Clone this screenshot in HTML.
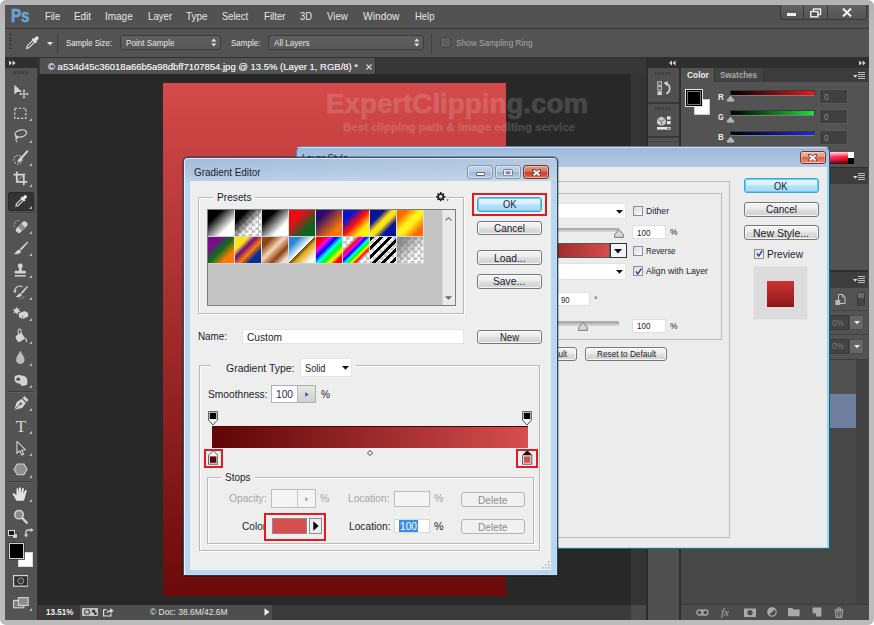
<!DOCTYPE html>
<html lang="en"><head><meta charset="utf-8"><title>Gradient Editor</title>
<style>
html,body{margin:0;padding:0;background:#fff;}
body{width:874px;height:625px;overflow:hidden;position:relative;font-family:"Liberation Sans", sans-serif;}
#app{position:absolute;left:0;top:0;width:874px;height:625px;overflow:hidden;}
#app div,#app span,#app svg{position:absolute;box-sizing:border-box;}
#app span{white-space:pre;transform-origin:0 50%;}
</style></head>
<body><div id="app">
<div style="left:0px;top:0px;width:874px;height:625px;background:linear-gradient(#b2b2b2,#bcbcbc 30px);border-radius:6px;"></div>
<div style="left:5px;top:5px;width:864px;height:615px;background:#535353;"></div>
<div style="left:5px;top:5px;width:864px;height:23px;background:#525252;"></div>
<div style="left:5px;top:27.6px;width:864px;height:1.2px;background:#3a3a3a;"></div>
<span style="left:10.5px;top:5.8px;font-size:18px;line-height:20px;color:#6ea5d8;font-weight:bold;-webkit-text-stroke:0.5px #6ea5d8;transform:scaleX(0.84);">Ps</span>
<span style="left:44.8px;top:9.4px;font-size:11px;line-height:14px;color:#e6e6e6;transform:scaleX(0.857);">File</span>
<span style="left:74px;top:9.4px;font-size:11px;line-height:14px;color:#e6e6e6;transform:scaleX(0.896);">Edit</span>
<span style="left:105px;top:9.4px;font-size:11px;line-height:14px;color:#e6e6e6;transform:scaleX(0.906);">Image</span>
<span style="left:147.6px;top:9.4px;font-size:11px;line-height:14px;color:#e6e6e6;transform:scaleX(0.879);">Layer</span>
<span style="left:185.5px;top:9.4px;font-size:11px;line-height:14px;color:#e6e6e6;transform:scaleX(0.901);">Type</span>
<span style="left:221.9px;top:9.4px;font-size:11px;line-height:14px;color:#e6e6e6;transform:scaleX(0.85);">Select</span>
<span style="left:263.5px;top:9.4px;font-size:11px;line-height:14px;color:#e6e6e6;transform:scaleX(0.879);">Filter</span>
<span style="left:300px;top:9.4px;font-size:11px;line-height:14px;color:#e6e6e6;transform:scaleX(0.853);">3D</span>
<span style="left:326.7px;top:9.4px;font-size:11px;line-height:14px;color:#e6e6e6;transform:scaleX(0.875);">View</span>
<span style="left:363.2px;top:9.4px;font-size:11px;line-height:14px;color:#e6e6e6;transform:scaleX(0.933);">Window</span>
<span style="left:414.6px;top:9.4px;font-size:11px;line-height:14px;color:#e6e6e6;transform:scaleX(0.857);">Help</span>
<div style="left:779.5px;top:5px;width:87px;height:14.8px;background:linear-gradient(#626262,#545454);border:1px solid #393939;border-radius:0 0 4px 4px;border-top:none;"></div>
<div style="left:803px;top:5px;width:1px;height:14px;background:#3a3a3a;"></div>
<div style="left:826.5px;top:5px;width:1px;height:14px;background:#3a3a3a;"></div>
<div style="left:787px;top:13.2px;width:9.4px;height:2.8px;background:#f0f0f0;"></div>
<svg style="left:809.5px;top:7.6px;" width="12" height="10" viewBox="0 0 12 10"><rect x="3.5" y="1" width="7" height="5.5" fill="none" stroke="#eee" stroke-width="1.4"/><rect x="0.8" y="3.6" width="7" height="5.2" fill="#4f4f4f" stroke="#eee" stroke-width="1.4"/></svg>
<svg style="left:842px;top:7.6px;" width="10" height="9" viewBox="0 0 10 9"><path d="M1 0.6 L9 8.4 M9 0.6 L1 8.4" stroke="#f4f4f4" stroke-width="2.1" fill="none"/></svg>
<div style="left:5px;top:29px;width:864px;height:28px;background:#535353;"></div>
<div style="left:5px;top:57px;width:864px;height:1px;background:#303030;"></div>
<div style="left:8.7px;top:32.5px;width:3.2px;height:1px;background:#3a3a3a;"></div>
<div style="left:8.7px;top:35px;width:3.2px;height:1px;background:#3a3a3a;"></div>
<div style="left:8.7px;top:37.5px;width:3.2px;height:1px;background:#3a3a3a;"></div>
<div style="left:8.7px;top:40px;width:3.2px;height:1px;background:#3a3a3a;"></div>
<div style="left:8.7px;top:42.5px;width:3.2px;height:1px;background:#3a3a3a;"></div>
<div style="left:8.7px;top:45px;width:3.2px;height:1px;background:#3a3a3a;"></div>
<div style="left:8.7px;top:47.5px;width:3.2px;height:1px;background:#3a3a3a;"></div>
<svg style="left:24px;top:34.5px;" width="16" height="16" viewBox="0 0 16 16"><g transform="rotate(45 8 8)"><rect x="6.7" y="5.5" width="2.6" height="9" rx="0.8" fill="none" stroke="#e4e4e4" stroke-width="1.1"/><rect x="5.2" y="3.6" width="5.6" height="2" fill="#e4e4e4"/><rect x="6.2" y="-0.6" width="3.6" height="4.6" rx="1.6" fill="#e4e4e4"/><path d="M8 14.5 L8 16.3" stroke="#e4e4e4" stroke-width="1"/></g></svg>
<svg style="left:46.5px;top:41.5px;" width="6" height="4" viewBox="0 0 6 4"><path d="M0 0 L6 0 L3 3.4 Z" fill="#e0e0e0"/></svg>
<div style="left:57px;top:33px;width:1px;height:20px;background:#3d3d3d;"></div>
<span style="left:65.5px;top:35.8px;font-size:9.5px;line-height:14px;color:#ececec;transform:scaleX(0.822);">Sample Size:</span>
<div style="left:119.5px;top:35px;width:101px;height:15px;background:linear-gradient(#5f5f5f,#585858);border:1px solid #3c3c3c;border-radius:3px;"></div>
<span style="left:125.5px;top:35.8px;font-size:9.5px;line-height:14px;color:#e4e4e4;transform:scaleX(0.858);">Point Sample</span>
<svg style="left:211px;top:38.2px;" width="6" height="9" viewBox="0 0 6 9"><path d="M0.3 3.4 L5.3 3.4 L2.8 0.4 Z M0.3 5.4 L5.3 5.4 L2.8 8.4 Z" fill="#e6e6e6"/></svg>
<span style="left:231.2px;top:35.8px;font-size:9.5px;line-height:14px;color:#ececec;transform:scaleX(0.846);">Sample:</span>
<div style="left:267.5px;top:35px;width:156px;height:15px;background:linear-gradient(#5f5f5f,#585858);border:1px solid #3c3c3c;border-radius:3px;"></div>
<span style="left:273.5px;top:35.8px;font-size:9.5px;line-height:14px;color:#e4e4e4;transform:scaleX(0.851);">All Layers</span>
<svg style="left:414px;top:38.2px;" width="6" height="9" viewBox="0 0 6 9"><path d="M0.3 3.4 L5.3 3.4 L2.8 0.4 Z M0.3 5.4 L5.3 5.4 L2.8 8.4 Z" fill="#e6e6e6"/></svg>
<div style="left:431px;top:33px;width:1px;height:20px;background:#404040;"></div>
<div style="left:439.5px;top:37.2px;width:11.5px;height:11.3px;background:#5e5e5e;border:1px solid #474747;border-radius:2px;"></div>
<span style="left:455.5px;top:35.6px;font-size:9.5px;line-height:14px;color:#a6a6a6;transform:scaleX(0.867);">Show Sampling Ring</span>
<div style="left:5px;top:58px;width:32px;height:562px;background:#535353;"></div>
<div style="left:5px;top:58px;width:32px;height:9.5px;background:#2f2f2f;"></div>
<svg style="left:9px;top:59.5px;" width="8" height="6" viewBox="0 0 8 6"><path d="M0 0.5 L3 3 L0 5.5 Z M3.6 0.5 L6.6 3 L3.6 5.5 Z" fill="#d6d6d6"/></svg>
<div style="left:37px;top:58px;width:1px;height:562px;background:#333;"></div>
<div style="left:13px;top:71px;width:1px;height:3px;background:#3b3b3b;"></div>
<div style="left:15px;top:71px;width:1px;height:3px;background:#3b3b3b;"></div>
<div style="left:17px;top:71px;width:1px;height:3px;background:#3b3b3b;"></div>
<div style="left:19px;top:71px;width:1px;height:3px;background:#3b3b3b;"></div>
<div style="left:21px;top:71px;width:1px;height:3px;background:#3b3b3b;"></div>
<div style="left:23px;top:71px;width:1px;height:3px;background:#3b3b3b;"></div>
<div style="left:25px;top:71px;width:1px;height:3px;background:#3b3b3b;"></div>
<div style="left:27px;top:71px;width:1px;height:3px;background:#3b3b3b;"></div>
<div style="left:8px;top:192px;width:26px;height:18.5px;background:#343434;border:1px solid #2a2a2a;border-radius:2px;"></div>
<div style="left:8px;top:212.3px;width:26px;height:1px;background:#3f3f3f;"></div>
<div style="left:8px;top:213.3px;width:26px;height:1px;background:#5c5c5c;"></div>
<div style="left:8px;top:391px;width:26px;height:1px;background:#3f3f3f;"></div>
<div style="left:8px;top:392px;width:26px;height:1px;background:#5c5c5c;"></div>
<div style="left:8px;top:480.8px;width:26px;height:1px;background:#3f3f3f;"></div>
<div style="left:8px;top:481.8px;width:26px;height:1px;background:#5c5c5c;"></div>
<svg style="left:12.2px;top:82.7px;" width="16.6" height="16.6" viewBox="0 0 18 18"><path d="M2.5 2 L2.5 12.5 L5.6 9.8 L10.8 9.6 Z" fill="#d4d4d4"/><path d="M13 8 L13 16 M9 12 L17 12" stroke="#d4d4d4" stroke-width="1.1"/><path d="M13 6.8 L14.6 9 L11.4 9 Z M13 17.2 L14.6 15 L11.4 15 Z M7.8 12 L10 10.4 L10 13.6 Z M18.2 12 L16 10.4 L16 13.6 Z" fill="#d4d4d4"/></svg>
<svg style="left:12.2px;top:105px;" width="16.6" height="16.6" viewBox="0 0 18 18"><rect x="3" y="3.5" width="12" height="11" fill="none" stroke="#d4d4d4" stroke-width="1.3" stroke-dasharray="2.6 1.7"/></svg>
<svg style="left:28.8px;top:118.1px;" width="3" height="3" viewBox="0 0 3 3"><path d="M3 0 L3 3 L0 3 Z" fill="#b4b4b4"/></svg>
<svg style="left:12.2px;top:127.2px;" width="16.6" height="16.6" viewBox="0 0 18 18"><ellipse cx="9.5" cy="7" rx="6.3" ry="3.8" fill="none" stroke="#d4d4d4" stroke-width="1.4" transform="rotate(-12 9.5 7)"/><path d="M5 9.5 C3 11 4.5 13 6 12 C7 11.3 5.6 10 4.8 11.5 C4 13 4.2 15 5.5 16.5" fill="none" stroke="#d4d4d4" stroke-width="1.1"/></svg>
<svg style="left:28.8px;top:140.3px;" width="3" height="3" viewBox="0 0 3 3"><path d="M3 0 L3 3 L0 3 Z" fill="#b4b4b4"/></svg>
<svg style="left:12.2px;top:149.7px;" width="16.6" height="16.6" viewBox="0 0 18 18"><ellipse cx="6.5" cy="10.5" rx="4.3" ry="4.8" fill="none" stroke="#d4d4d4" stroke-width="1.1" stroke-dasharray="1.8 1.4"/><path d="M16.5 1.5 L9.5 9.5" stroke="#d4d4d4" stroke-width="2.2" stroke-linecap="round"/><path d="M9.8 8.2 C7.5 8.6 6.2 11 5.8 13.2 C8.6 13.4 11 12.2 11.2 9.8 Z" fill="#d4d4d4"/></svg>
<svg style="left:28.8px;top:162.8px;" width="3" height="3" viewBox="0 0 3 3"><path d="M3 0 L3 3 L0 3 Z" fill="#b4b4b4"/></svg>
<svg style="left:12.2px;top:170.4px;" width="16.6" height="16.6" viewBox="0 0 18 18"><path d="M5.2 1.5 L5.2 13 L16.5 13 M1.5 5 L12.8 5 L12.8 16.5" fill="none" stroke="#d4d4d4" stroke-width="1.9"/><path d="M14.5 3.5 L6.5 11.5" stroke="#d4d4d4" stroke-width="0.9"/></svg>
<svg style="left:28.8px;top:183.5px;" width="3" height="3" viewBox="0 0 3 3"><path d="M3 0 L3 3 L0 3 Z" fill="#b4b4b4"/></svg>
<svg style="left:12.2px;top:193px;" width="16.6" height="16.6" viewBox="0 0 18 18"><g transform="translate(1.5 1)"><g transform="rotate(45 8 8)"><rect x="6.7" y="5.5" width="2.6" height="9" rx="0.8" fill="none" stroke="#ececec" stroke-width="1.1"/><rect x="5.2" y="3.6" width="5.6" height="2" fill="#ececec"/><rect x="6.2" y="-0.6" width="3.6" height="4.6" rx="1.6" fill="#ececec"/><path d="M8 14.5 L8 16.3" stroke="#ececec" stroke-width="1"/></g></g></svg>
<svg style="left:28.8px;top:206.1px;" width="3" height="3" viewBox="0 0 3 3"><path d="M3 0 L3 3 L0 3 Z" fill="#b4b4b4"/></svg>
<svg style="left:12.2px;top:218.3px;" width="16.6" height="16.6" viewBox="0 0 18 18"><g transform="rotate(-45 10.5 10)"><rect x="3" y="6.8" width="15" height="6.4" rx="3.2" fill="#d4d4d4"/><rect x="8" y="6.8" width="5" height="6.4" fill="#8c8c8c"/></g><path d="M2.5 9.5 A5 5 0 0 1 8.5 3" fill="none" stroke="#d4d4d4" stroke-width="1" stroke-dasharray="1.5 1.3"/></svg>
<svg style="left:28.8px;top:231.4px;" width="3" height="3" viewBox="0 0 3 3"><path d="M3 0 L3 3 L0 3 Z" fill="#b4b4b4"/></svg>
<svg style="left:12.2px;top:239.6px;" width="16.6" height="16.6" viewBox="0 0 18 18"><path d="M16.8 1.5 L8.6 9.6 L10.2 11.2 L17.6 2.6 Z" fill="#d4d4d4"/><path d="M8 10.2 C5.4 10.4 5 13 2.2 15.2 C6 16 9.6 14.6 9.8 11.8 Z" fill="#d4d4d4"/></svg>
<svg style="left:28.8px;top:252.7px;" width="3" height="3" viewBox="0 0 3 3"><path d="M3 0 L3 3 L0 3 Z" fill="#b4b4b4"/></svg>
<svg style="left:12.2px;top:261.5px;" width="16.6" height="16.6" viewBox="0 0 18 18"><circle cx="9" cy="4.3" r="2.7" fill="#d4d4d4"/><path d="M7.8 6 L10.2 6 L10.8 10 L7.2 10 Z" fill="#d4d4d4"/><rect x="3" y="9.6" width="12" height="3" rx="0.8" fill="#d4d4d4"/><rect x="3" y="14.2" width="12" height="1.6" fill="#d4d4d4"/></svg>
<svg style="left:28.8px;top:274.6px;" width="3" height="3" viewBox="0 0 3 3"><path d="M3 0 L3 3 L0 3 Z" fill="#b4b4b4"/></svg>
<svg style="left:12.2px;top:283.7px;" width="16.6" height="16.6" viewBox="0 0 18 18"><path d="M16.5 2 L9.6 9.4 L11 10.8 L17.4 3 Z" fill="#d4d4d4"/><path d="M9 10 C6.8 10.2 6.4 12.4 4.2 14.2 C7.4 15 10.4 13.8 10.6 11.4 Z" fill="#d4d4d4"/><path d="M3 8.5 A5.5 5.5 0 0 1 11.5 3.2" fill="none" stroke="#d4d4d4" stroke-width="1.2"/><path d="M1.2 7 L3.2 10 L5.2 7 Z" fill="#d4d4d4"/><path d="M13 13.5 A5.5 5.5 0 0 1 8 16.2" fill="none" stroke="#d4d4d4" stroke-width="1" stroke-dasharray="1.4 1.2"/></svg>
<svg style="left:28.8px;top:296.8px;" width="3" height="3" viewBox="0 0 3 3"><path d="M3 0 L3 3 L0 3 Z" fill="#b4b4b4"/></svg>
<svg style="left:12.2px;top:305.3px;" width="16.6" height="16.6" viewBox="0 0 18 18"><path d="M7.5 9 L13.5 6.5 L17.5 8.6 L17.5 12.4 L11.6 15.2 L7.5 13 Z" fill="#d4d4d4"/><path d="M11.6 11 L11.6 15.2" stroke="#777" stroke-width="0.8"/><path d="M4.8 1.6 L5.8 4.4 L8.6 3.4 L7 5.8 L9.4 7.6 L6.4 7.8 L6 10.6 L4.2 8.2 L1.6 9.6 L2.6 6.8 L0.4 5 L3.4 4.8 Z" fill="#d4d4d4"/></svg>
<svg style="left:28.8px;top:318.4px;" width="3" height="3" viewBox="0 0 3 3"><path d="M3 0 L3 3 L0 3 Z" fill="#b4b4b4"/></svg>
<svg style="left:12.2px;top:327.7px;" width="16.6" height="16.6" viewBox="0 0 18 18"><path d="M4.2 8.6 L10.2 5 L14.2 11.4 L8.2 15.2 C6.6 16 3 10.4 4.2 8.6 Z" fill="#d4d4d4"/><path d="M6.8 8.6 L6.8 2.6 C6.8 0.6 9.8 0.6 9.8 2.6 L9.8 6" fill="none" stroke="#d4d4d4" stroke-width="1.1"/><path d="M14.2 10.4 C16.2 11.6 16.8 14 16.2 16 C15 15 14.6 13 14.2 10.4 Z" fill="#d4d4d4"/></svg>
<svg style="left:28.8px;top:340.8px;" width="3" height="3" viewBox="0 0 3 3"><path d="M3 0 L3 3 L0 3 Z" fill="#b4b4b4"/></svg>
<svg style="left:12.2px;top:349.4px;" width="16.6" height="16.6" viewBox="0 0 18 18"><path d="M9 2 C10.6 5.6 13.6 8.4 13.6 11.6 A4.6 4.6 0 0 1 4.4 11.6 C4.4 8.4 7.4 5.6 9 2 Z" fill="#bcbcbc"/></svg>
<svg style="left:28.8px;top:362.5px;" width="3" height="3" viewBox="0 0 3 3"><path d="M3 0 L3 3 L0 3 Z" fill="#b4b4b4"/></svg>
<svg style="left:12.2px;top:371.6px;" width="16.6" height="16.6" viewBox="0 0 18 18"><path d="M2.6 6.4 C2.6 3.6 6 3 9 3.4 C12.6 3.8 16.6 5.2 16.6 8.6 L16.6 12.6 C16.6 15 13 15.2 10.6 14.8 L8 12.6 C4.6 12.4 2.6 10.4 2.6 6.4 Z" fill="#d4d4d4"/><ellipse cx="6.8" cy="7.8" rx="2" ry="1.7" fill="#4a4a4a"/></svg>
<svg style="left:28.8px;top:384.7px;" width="3" height="3" viewBox="0 0 3 3"><path d="M3 0 L3 3 L0 3 Z" fill="#b4b4b4"/></svg>
<svg style="left:12.2px;top:395.3px;" width="16.6" height="16.6" viewBox="0 0 18 18"><path d="M2.6 16 L4.8 8 L10.4 4 L15 8.6 L11 14 Z" fill="#d4d4d4"/><path d="M11.4 3.2 L13.6 1 L18 5.4 L15.8 7.6 Z" fill="#d4d4d4"/><path d="M3 15.6 L8.6 10" stroke="#4a4a4a" stroke-width="1"/><circle cx="9.4" cy="9.4" r="1.3" fill="#4a4a4a"/></svg>
<svg style="left:28.8px;top:408.4px;" width="3" height="3" viewBox="0 0 3 3"><path d="M3 0 L3 3 L0 3 Z" fill="#b4b4b4"/></svg>
<span style="left:15.8px;top:417.5px;font-size:17px;line-height:18px;color:#d6d6d6;font-family:'Liberation Serif',serif;">T</span>
<svg style="left:28.8px;top:431.3px;" width="3" height="3" viewBox="0 0 3 3"><path d="M3 0 L3 3 L0 3 Z" fill="#bdbdbd"/></svg>
<svg style="left:12.2px;top:440px;" width="16.6" height="16.6" viewBox="0 0 18 18"><path d="M5.4 1.6 L5.4 14.6 L8.4 11.6 L10.6 16.4 L12.6 15.4 L10.4 10.8 L14.6 10.6 Z" fill="#4a4a4a" stroke="#d4d4d4" stroke-width="1.2" stroke-linejoin="round"/></svg>
<svg style="left:28.8px;top:453.1px;" width="3" height="3" viewBox="0 0 3 3"><path d="M3 0 L3 3 L0 3 Z" fill="#b4b4b4"/></svg>
<svg style="left:12.2px;top:461.4px;" width="16.6" height="16.6" viewBox="0 0 18 18"><path d="M2.2 9 L5.6 3.2 L13 3.2 L16.4 9 L13 14.8 L5.6 14.8 Z" fill="#8e8e8e" stroke="#d4d4d4" stroke-width="1.1"/></svg>
<svg style="left:28.8px;top:474.5px;" width="3" height="3" viewBox="0 0 3 3"><path d="M3 0 L3 3 L0 3 Z" fill="#b4b4b4"/></svg>
<svg style="left:12.2px;top:486.2px;" width="16.6" height="16.6" viewBox="0 0 18 18"><path transform="translate(-1.2 0) scale(1.16 1)" d="M5 16 L3.2 11.6 C2 9.6 1 8.4 2.2 7.8 C3.4 7.4 4.4 9 5.2 10 L5.2 3.6 C5.2 2.2 7 2.2 7 3.6 L7.2 8 L7.6 2.2 C7.8 0.8 9.6 1 9.4 2.4 L9.4 8 L10.4 2.8 C10.6 1.6 12.4 2 12.2 3.2 L11.6 8.4 L13.2 4.8 C13.6 3.6 15.2 4.2 14.8 5.4 L13.4 11 C13.2 13 12.6 14.4 12 16 Z" fill="#e2e2e2"/></svg>
<svg style="left:28.8px;top:499.3px;" width="3" height="3" viewBox="0 0 3 3"><path d="M3 0 L3 3 L0 3 Z" fill="#b4b4b4"/></svg>
<svg style="left:12.2px;top:507.7px;" width="16.6" height="16.6" viewBox="0 0 18 18"><circle cx="7.6" cy="7.2" r="4.6" fill="#8a8a8a" stroke="#d4d4d4" stroke-width="1.6"/><path d="M11 10.8 L16 16" stroke="#d4d4d4" stroke-width="2.6" stroke-linecap="round"/></svg>
<div style="left:11.5px;top:532.5px;width:6px;height:6px;background:#d0d0d0;border:1px solid #444;"></div>
<div style="left:8.3px;top:529.5px;width:6.4px;height:6.4px;background:#1a1a1a;border:1px solid #d8d8d8;"></div>
<svg style="left:23.5px;top:528px;" width="10" height="10" viewBox="0 0 10 10"><path d="M2 7.6 L2 3.6 Q2 2 3.6 2 L7.4 2" fill="none" stroke="#d4d4d4" stroke-width="1.3"/><path d="M0 6.6 L4 6.6 L2 9.6 Z M6.6 0 L6.6 4 L9.6 2 Z" fill="#d4d4d4"/></svg>
<div style="left:17.7px;top:552px;width:15.8px;height:15px;background:#fff;border:1px solid #d8d8d8;"></div>
<div style="left:8.8px;top:542.8px;width:15.6px;height:16.2px;background:#000;border:1px solid #cfcfcf;box-shadow:0 0 0 0.8px #3a3a3a;"></div>
<svg style="left:12.6px;top:575.2px;" width="15.6" height="12" viewBox="0 0 15.6 12"><rect x="0.6" y="0.6" width="14.4" height="10.6" fill="#2e2e2e" stroke="#d4d4d4" stroke-width="1.2"/><circle cx="7.8" cy="5.9" r="3" fill="#3a3a3a" stroke="#9a9a9a" stroke-width="1"/></svg>
<svg style="left:12.6px;top:597px;" width="16" height="11.5" viewBox="0 0 16 11.5"><rect x="0.6" y="3.4" width="10.2" height="7.4" fill="#7a7a7a" stroke="#d4d4d4" stroke-width="1.1"/><rect x="5.4" y="0.6" width="9.8" height="7.8" fill="#8c8c8c" stroke="#d4d4d4" stroke-width="1.1"/></svg>
<svg style="left:28.8px;top:607.5px;" width="3" height="3" viewBox="0 0 3 3"><path d="M3 0 L3 3 L0 3 Z" fill="#b4b4b4"/></svg>
<div style="left:38px;top:58px;width:608px;height:16px;background:#373737;"></div>
<div style="left:38px;top:74px;width:593px;height:531px;background:#282828;"></div>
<div style="left:40px;top:58px;width:336px;height:16px;background:#525252;border-right:1px solid #2c2c2c;"></div>
<span style="left:47.5px;top:59.8px;font-size:9.5px;line-height:14px;color:#e8e8e8;text-shadow:0 0 0.5px #ddd;transform:scaleX(0.998);">© a534d45c36018a66b5a98dbff7107854.jpg @ 13.5% (Layer 1, RGB/8) *</span>
<svg style="left:365.5px;top:63.5px;" width="6" height="6" viewBox="0 0 6 6"><path d="M0.5 0.5 L5.5 5.5 M5.5 0.5 L0.5 5.5" stroke="#d8d8d8" stroke-width="1.1"/></svg>
<div style="left:631px;top:74px;width:14.5px;height:531px;background:#353535;"></div>
<div style="left:645.5px;top:58px;width:2px;height:562px;background:#2b2b2b;"></div>
<div style="left:163.2px;top:82.8px;width:343.1px;height:513.4px;background:linear-gradient(#d44a4a,#6a0a0a);"></div>
<span style="left:326px;top:88.8px;font-size:28px;line-height:30px;color:#fff;font-weight:bold;-webkit-text-stroke:0.7px #fff;opacity:0.14;transform:scaleX(0.991);">ExpertClipping.com</span>
<span style="left:342.8px;top:120.3px;font-size:11.5px;line-height:14px;color:#fff;font-weight:bold;-webkit-text-stroke:0.3px #fff;opacity:0.14;transform:scaleX(1.003);">Best clipping path &amp; image editing service</span>
<div style="left:38px;top:605px;width:593px;height:15px;background:#3a3a3a;"></div>
<div style="left:80px;top:605px;width:192px;height:15px;background:#4e4e4e;"></div>
<span style="left:45.8px;top:604.7px;font-size:9px;line-height:14px;color:#f2f2f2;font-weight:bold;transform:scaleX(0.894);">13.51%</span>
<div style="left:81.5px;top:608px;width:16.5px;height:8.2px;background:#c4c4c4;border-radius:1px;"></div>
<svg style="left:82.5px;top:608.2px;" width="15" height="8" viewBox="0 0 15 8"><circle cx="4" cy="4" r="2.5" fill="none" stroke="#333" stroke-width="1.6" stroke-dasharray="1.3 0.8"/><circle cx="10.6" cy="3.2" r="1.6" fill="#333"/><circle cx="12.4" cy="5.6" r="1.4" fill="#333"/></svg>
<svg style="left:102.5px;top:607.3px;" width="11" height="10" viewBox="0 0 11 10"><path d="M0.6 2.6 L0.6 9 L8 9 L8 6.6" fill="none" stroke="#ddd" stroke-width="1.2"/><path d="M0.6 2.6 L3.6 2.6" stroke="#ddd" stroke-width="1.2"/><path d="M3.4 6.6 C3.8 4 5.6 3 7.4 3 L7.4 1 L10.6 3.8 L7.4 6.6 L7.4 4.8 C5.8 4.8 4.6 5.2 3.4 6.6 Z" fill="#ddd"/></svg>
<span style="left:150px;top:605.2px;font-size:9.5px;line-height:14px;color:#e6e6e6;transform:scaleX(0.888);">© Doc: 38.6M/42.6M</span>
<svg style="left:263.5px;top:608px;" width="6" height="8" viewBox="0 0 6 8"><path d="M0.5 0.3 L5.5 4 L0.5 7.7 Z" fill="#efefef"/></svg>
<div style="left:631px;top:605px;width:14.5px;height:15px;background:#4a4a4a;"></div>
<div style="left:647.5px;top:58px;width:221.5px;height:9.5px;background:#2f2f2f;"></div>
<svg style="left:668.5px;top:59.8px;" width="8" height="6" viewBox="0 0 8 6"><path d="M3 0.5 L0 3 L3 5.5 Z M6.6 0.5 L3.6 3 L6.6 5.5 Z" fill="#d6d6d6"/></svg>
<svg style="left:858.5px;top:59.8px;" width="8" height="6" viewBox="0 0 8 6"><path d="M0 0.5 L3 3 L0 5.5 Z M3.6 0.5 L6.6 3 L3.6 5.5 Z" fill="#d6d6d6"/></svg>
<div style="left:647.5px;top:67.5px;width:31px;height:552.5px;background:#505050;"></div>
<div style="left:678.5px;top:67.5px;width:2.5px;height:552.5px;background:#2e2e2e;"></div>
<div style="left:647.5px;top:101.5px;width:31px;height:2px;background:#383838;"></div>
<div style="left:647.5px;top:135.8px;width:31px;height:2px;background:#383838;"></div>
<div style="left:655px;top:72px;width:1px;height:3px;background:#3a3a3a;"></div>
<div style="left:657px;top:72px;width:1px;height:3px;background:#3a3a3a;"></div>
<div style="left:659px;top:72px;width:1px;height:3px;background:#3a3a3a;"></div>
<div style="left:661px;top:72px;width:1px;height:3px;background:#3a3a3a;"></div>
<div style="left:663px;top:72px;width:1px;height:3px;background:#3a3a3a;"></div>
<div style="left:665px;top:72px;width:1px;height:3px;background:#3a3a3a;"></div>
<div style="left:667px;top:72px;width:1px;height:3px;background:#3a3a3a;"></div>
<div style="left:669px;top:72px;width:1px;height:3px;background:#3a3a3a;"></div>
<div style="left:655px;top:106.5px;width:1px;height:3px;background:#3a3a3a;"></div>
<div style="left:657px;top:106.5px;width:1px;height:3px;background:#3a3a3a;"></div>
<div style="left:659px;top:106.5px;width:1px;height:3px;background:#3a3a3a;"></div>
<div style="left:661px;top:106.5px;width:1px;height:3px;background:#3a3a3a;"></div>
<div style="left:663px;top:106.5px;width:1px;height:3px;background:#3a3a3a;"></div>
<div style="left:665px;top:106.5px;width:1px;height:3px;background:#3a3a3a;"></div>
<div style="left:667px;top:106.5px;width:1px;height:3px;background:#3a3a3a;"></div>
<div style="left:669px;top:106.5px;width:1px;height:3px;background:#3a3a3a;"></div>
<div style="left:647.5px;top:141px;width:31px;height:1px;background:#454545;"></div>
<svg style="left:657px;top:81px;" width="15" height="15" viewBox="0 0 15 15"><rect x="0.8" y="0.8" width="3.6" height="3.4" fill="none" stroke="#d8d8d8" stroke-width="0.9"/><rect x="0.8" y="5.6" width="3.6" height="3.4" fill="none" stroke="#d8d8d8" stroke-width="0.9"/><rect x="0.5" y="10.3" width="4.4" height="3.8" fill="#d0d0d0"/><path d="M9 2.6 C13.6 3.6 14 10 9.4 12.8" fill="none" stroke="#d8d8d8" stroke-width="1.6"/><path d="M6.6 1.4 L11 0.6 L9.6 5 Z" fill="#d8d8d8"/></svg>
<svg style="left:656px;top:115px;" width="16" height="15" viewBox="0 0 16 15"><path d="M1 4 L5.4 1.6 L9.8 4 L9.8 8.8 L5.4 11.2 L1 8.8 Z" fill="#c8c8c8"/><path d="M1 4 L5.4 6.2 L9.8 4 M5.4 6.2 L5.4 11.2" stroke="#666" stroke-width="0.8" fill="none"/><rect x="11" y="1.4" width="3.6" height="3.2" fill="#e6e6e6"/><rect x="11" y="6" width="3.6" height="3.2" fill="#e6e6e6"/><rect x="1" y="12" width="13.6" height="2.6" fill="#e6e6e6"/><rect x="11.5" y="12.6" width="2" height="1.4" fill="#555"/></svg>
<div style="left:681px;top:67.5px;width:188px;height:14.3px;background:#3c3c3c;"></div>
<div style="left:681px;top:81.8px;width:188px;height:85px;background:#535353;"></div>
<div style="left:681px;top:68.4px;width:34px;height:13.6px;background:#535353;border-right:1px solid #333;"></div>
<div style="left:715px;top:68.4px;width:49px;height:13px;background:#434343;border-right:1px solid #333;"></div>
<span style="left:686.7px;top:68.2px;font-size:9.5px;line-height:14px;color:#f0f0f0;font-weight:bold;transform:scaleX(0.879);">Color</span>
<span style="left:720.3px;top:68.2px;font-size:9.5px;line-height:14px;color:#a8a8a8;font-weight:bold;transform:scaleX(0.844);">Swatches</span>
<svg style="left:853px;top:72px;" width="12" height="8" viewBox="0 0 12 8"><path d="M0 3 L4.6 3 L2.3 5.8 Z" fill="#d8d8d8"/><path d="M5 0.5 L12 0.5 M5 2.5 L12 2.5 M5 4.5 L12 4.5 M5 6.5 L12 6.5" stroke="#bdbdbd" stroke-width="1"/></svg>
<div style="left:694px;top:99px;width:16px;height:15.6px;background:#fff;border:1px solid #ccc;"></div>
<div style="left:684.5px;top:89.2px;width:18.2px;height:18.3px;background:#000;border:1px solid #e6e6e6;box-shadow:inset 0 0 0 1px #000, inset 0 0 0 2px #777;"></div>
<span style="left:717.6px;top:89.6px;font-size:9.5px;line-height:14px;color:#efefef;font-weight:bold;transform:scaleX(0.844);">R</span>
<div style="left:730.2px;top:89.8px;width:84.5px;height:5.8px;background:linear-gradient(90deg,#000,#f01818);border:1px solid #3a3a3a;border-bottom-color:#7a7a7a;"></div>
<svg style="left:726.2px;top:95.4px;" width="9" height="7.4" viewBox="0 0 9 7.4"><path d="M4.5 0.3 L8.4 4.6 L8.4 7 L0.6 7 L0.6 4.6 Z" fill="#b4b4b4" stroke="#444" stroke-width="0.6"/></svg>
<div style="left:819px;top:89px;width:29px;height:15.2px;background:#404040;border:1px solid #5a5a5a;"></div>
<span style="left:823.6px;top:90.1px;font-size:9px;line-height:14px;color:#8c8c8c;transform:scaleX(0.917);">0</span>
<span style="left:717.6px;top:110px;font-size:9.5px;line-height:14px;color:#efefef;font-weight:bold;transform:scaleX(0.785);">G</span>
<div style="left:730.2px;top:110px;width:84.5px;height:5.8px;background:linear-gradient(90deg,#000,#20e038);border:1px solid #3a3a3a;border-bottom-color:#7a7a7a;"></div>
<svg style="left:726.2px;top:115.6px;" width="9" height="7.4" viewBox="0 0 9 7.4"><path d="M4.5 0.3 L8.4 4.6 L8.4 7 L0.6 7 L0.6 4.6 Z" fill="#b4b4b4" stroke="#444" stroke-width="0.6"/></svg>
<div style="left:819px;top:109.2px;width:29px;height:15.2px;background:#404040;border:1px solid #5a5a5a;"></div>
<span style="left:823.6px;top:110.3px;font-size:9px;line-height:14px;color:#8c8c8c;transform:scaleX(0.917);">0</span>
<span style="left:717.6px;top:130px;font-size:9.5px;line-height:14px;color:#efefef;font-weight:bold;transform:scaleX(0.844);">B</span>
<div style="left:730.2px;top:130.6px;width:84.5px;height:5.8px;background:linear-gradient(90deg,#000,#1828e8);border:1px solid #3a3a3a;border-bottom-color:#7a7a7a;"></div>
<svg style="left:726.2px;top:136.2px;" width="9" height="7.4" viewBox="0 0 9 7.4"><path d="M4.5 0.3 L8.4 4.6 L8.4 7 L0.6 7 L0.6 4.6 Z" fill="#b4b4b4" stroke="#444" stroke-width="0.6"/></svg>
<div style="left:819px;top:129.8px;width:29px;height:15.2px;background:#404040;border:1px solid #5a5a5a;"></div>
<span style="left:823.6px;top:130.9px;font-size:9px;line-height:14px;color:#8c8c8c;transform:scaleX(0.917);">0</span>
<div style="left:830px;top:151.5px;width:23.5px;height:12.2px;background:linear-gradient(180deg,rgba(255,255,255,.85) 0%,rgba(255,255,255,0) 45%,rgba(0,0,0,0) 55%,rgba(0,0,0,.75) 100%),linear-gradient(90deg,#ff2a6a,#ff0000);"></div>
<div style="left:848px;top:151.5px;width:5.5px;height:6.2px;background:#fff;"></div>
<div style="left:848px;top:157.7px;width:5.5px;height:6px;background:#000;"></div>
<div style="left:681px;top:166.6px;width:188px;height:1.5px;background:#2e2e2e;"></div>
<div style="left:681px;top:168.1px;width:188px;height:15.5px;background:#3c3c3c;"></div>
<svg style="left:853px;top:173px;" width="12" height="8" viewBox="0 0 12 8"><path d="M0 3 L4.6 3 L2.3 5.8 Z" fill="#d8d8d8"/><path d="M5 0.5 L12 0.5 M5 2.5 L12 2.5 M5 4.5 L12 4.5 M5 6.5 L12 6.5" stroke="#bdbdbd" stroke-width="1"/></svg>
<div style="left:681px;top:183.6px;width:188px;height:86.4px;background:#535353;"></div>
<div style="left:681px;top:270px;width:188px;height:1.5px;background:#2e2e2e;"></div>
<div style="left:681px;top:271.5px;width:188px;height:16px;background:#3e3e3e;"></div>
<svg style="left:853px;top:276px;" width="12" height="8" viewBox="0 0 12 8"><path d="M0 3 L4.6 3 L2.3 5.8 Z" fill="#d8d8d8"/><path d="M5 0.5 L12 0.5 M5 2.5 L12 2.5 M5 4.5 L12 4.5 M5 6.5 L12 6.5" stroke="#bdbdbd" stroke-width="1"/></svg>
<div style="left:681px;top:287.5px;width:188px;height:72px;background:#535353;"></div>
<div style="left:681px;top:359.5px;width:188px;height:34.5px;background:#515151;"></div>
<div style="left:681px;top:394px;width:188px;height:209.5px;background:#474747;"></div>
<svg style="left:835px;top:293.5px;" width="11" height="12" viewBox="0 0 11 12"><path d="M3.5 0.5 L7.5 0.5 L10 3 L10 9.5 L3.5 9.5 Z" fill="none" stroke="#c4c4c4" stroke-width="1" stroke-linejoin="miter"/><path d="M7.5 0.5 L7.5 3 L10 3" fill="none" stroke="#c4c4c4" stroke-width="0.8"/><rect x="0.4" y="6" width="4.8" height="5" fill="#b8b8b8"/></svg>
<div style="left:857px;top:292px;width:8px;height:14px;background:#444;border:1px solid #3a3a3a;border-radius:1px;"></div>
<div style="left:858px;top:293px;width:6px;height:5px;background:#6a6a6a;"></div>
<div style="left:830px;top:310.2px;width:39px;height:1px;background:#444;"></div>
<div style="left:820px;top:315px;width:29px;height:15px;background:#434343;border:1px solid #3a3a3a;"></div>
<span style="left:832px;top:315.8px;font-size:9.5px;line-height:14px;color:#7c7c7c;transform:scaleX(0.874);">0%</span>
<div style="left:849px;top:315px;width:15px;height:15.2px;background:#666666;border:1px solid #4a4a4a;border-radius:2px;"></div>
<svg style="left:853.5px;top:321.2px;" width="6" height="4" viewBox="0 0 6 4"><path d="M0 0 L6 0 L3 3.2 Z" fill="#ececec"/></svg>
<div style="left:820px;top:338.6px;width:29px;height:15px;background:#434343;border:1px solid #3a3a3a;"></div>
<span style="left:832px;top:339.4px;font-size:9.5px;line-height:14px;color:#7c7c7c;transform:scaleX(0.874);">0%</span>
<div style="left:849px;top:338.6px;width:15px;height:15.2px;background:#666666;border:1px solid #4a4a4a;border-radius:2px;"></div>
<svg style="left:853.5px;top:344.8px;" width="6" height="4" viewBox="0 0 6 4"><path d="M0 0 L6 0 L3 3.2 Z" fill="#ececec"/></svg>
<div style="left:830px;top:334.2px;width:39px;height:1px;background:#444;"></div>
<div style="left:830px;top:358.5px;width:39px;height:1px;background:#3c3c3c;"></div>
<div style="left:856.4px;top:359.5px;width:11.2px;height:244px;background:#434343;"></div>
<div style="left:867.6px;top:67.5px;width:1.4px;height:552.5px;background:#4a4a4a;"></div>
<div style="left:830px;top:394px;width:26px;height:34px;background:#6e809d;"></div>
<div style="left:681px;top:603.5px;width:188px;height:1px;background:#3a3a3a;"></div>
<div style="left:681px;top:604.5px;width:188px;height:15.5px;background:#4c4c4c;"></div>
<svg style="left:696px;top:607.5px;" width="13" height="9" viewBox="0 0 13 9"><rect x="0.8" y="2" width="6.4" height="5" rx="2.5" fill="none" stroke="#a9a9a9" stroke-width="1.3"/><rect x="5.6" y="2" width="6.4" height="5" rx="2.5" fill="none" stroke="#a9a9a9" stroke-width="1.3"/></svg>
<span style="left:721px;top:605.3px;font-size:11px;line-height:14px;color:#a9a9a9;font-style:italic;font-family:'Liberation Serif',serif;">fx</span>
<svg style="left:743.5px;top:607.5px;" width="12" height="9" viewBox="0 0 12 9"><rect x="0" y="0.5" width="12" height="8.5" fill="#a9a9a9"/><circle cx="6" cy="4.7" r="2.6" fill="#4c4c4c"/></svg>
<svg style="left:767px;top:607px;" width="10" height="10" viewBox="0 0 10 10"><circle cx="5" cy="5" r="4.2" fill="none" stroke="#a9a9a9" stroke-width="1.2"/><path d="M2 8 A4.2 4.2 0 0 1 8 2 Z" fill="#a9a9a9"/></svg>
<svg style="left:788px;top:607px;" width="12" height="9.5" viewBox="0 0 12 9.5"><path d="M0 1 L4.4 1 L5.6 2.4 L11.6 2.4 L11.6 9.2 L0 9.2 Z" fill="#a9a9a9"/></svg>
<svg style="left:811.5px;top:607px;" width="10" height="10" viewBox="0 0 10 10"><path d="M0.6 0.6 L9.4 0.6 L9.4 9.4 L4 9.4 L0.6 6.4 Z" fill="#a9a9a9"/><path d="M0.6 6.4 L4 6.4 L4 9.4" fill="#4c4c4c"/></svg>
<svg style="left:833.5px;top:606.5px;" width="10" height="11" viewBox="0 0 10 11"><path d="M0.5 2.8 L9.5 2.8 M3.4 2.6 L3.4 1 L6.6 1 L6.6 2.6" fill="none" stroke="#a9a9a9" stroke-width="1"/><path d="M1.4 4 L8.6 4 L8 10.4 L2 10.4 Z" fill="none" stroke="#a9a9a9" stroke-width="1"/><path d="M3.8 4.4 L3.8 10 M6.2 4.4 L6.2 10" stroke="#a9a9a9" stroke-width="0.9"/></svg>
<div style="left:295.5px;top:146px;width:534.5px;height:403px;background:linear-gradient(#9cb8db 0px,#b3cbe7 21px,#c0d6ec 22px);border:1px solid #4e90b4;border-radius:6px 6px 1px 1px;border-right:1px solid #1f5a70;border-bottom:1.5px solid #1f6f8f;border-top-color:#6b7f95;"></div>
<div style="left:296.5px;top:147px;width:531.5px;height:1px;background:rgba(255,255,255,.55);border-radius:5px 5px 0 0;"></div>
<span style="left:302px;top:150.5px;font-size:11px;line-height:14px;color:#1c1c2c;transform:scaleX(0.836);">Layer Style</span>
<div style="left:800px;top:150.5px;width:26px;height:13.6px;background:linear-gradient(#ecb9ab 0%,#e39582 45%,#d4664f 50%,#dc7e66 85%,#e6a08a 100%);border:1px solid #7a3328;border-radius:3px;box-shadow:inset 0 0 0 1px rgba(255,255,255,.35);"></div>
<svg style="left:808.4px;top:153.5px;" width="9.2" height="7.6" viewBox="0 0 9.2 7.6"><path d="M1.6 1.2 L7.6 6.4 M7.6 1.2 L1.6 6.4" stroke="#7a3226" stroke-width="3" stroke-linecap="round"/><path d="M1.6 1.2 L7.6 6.4 M7.6 1.2 L1.6 6.4" stroke="#fff" stroke-width="1.9" stroke-linecap="butt"/></svg>
<div style="left:301px;top:167px;width:526px;height:379.5px;background:#ececec;"></div>
<div style="left:827px;top:167px;width:2px;height:380.5px;background:#8fd8f2;"></div>
<div style="left:540px;top:180.5px;width:189.5px;height:357px;border:1px solid #bdbdbd;border-left:none;"></div>
<div style="left:540px;top:193px;width:181.5px;height:146.7px;border:1px solid #bdbdbd;border-left:none;"></div>
<div style="left:500px;top:202.7px;width:125.5px;height:16.8px;background:#fff;border:1px solid #e2e2e2;"></div>
<svg style="left:615.5px;top:209.6px;" width="7" height="4" viewBox="0 0 7 4"><path d="M0 0 L7 0 L3.5 3.8 Z" fill="#111"/></svg>
<div style="left:633.3px;top:206px;width:10px;height:10px;background:linear-gradient(135deg,#dcdcdc,#fafafa);border:1px solid #8a8f99;"></div>
<span style="left:645.8px;top:204.2px;font-size:9.5px;line-height:14px;color:#1c1c2c;transform:scaleX(0.908);">Dither</span>
<div style="left:500px;top:227.5px;width:119px;height:4.4px;background:linear-gradient(#a9a9a9 0%,#b4b4b4 50%,#cdcdcd 55%,#d2d2d2 100%);border-radius:1px;"></div>
<svg style="left:613.8px;top:228.6px;" width="10.4" height="9" viewBox="0 0 10.4 9"><path d="M5 0.5 L9.4 5.6 L9.4 8.4 L0.6 8.4 L0.6 5.6 Z" fill="#d6d6d6" stroke="#6e6e6e" stroke-width="0.9"/></svg>
<div style="left:631.5px;top:225.2px;width:34.5px;height:14px;background:#fff;border:1px solid #e0e0e0;"></div>
<span style="left:636.5px;top:225.5px;font-size:9px;line-height:14px;color:#1c1c2c;transform:scaleX(0.898);">100</span>
<span style="left:669.5px;top:225.3px;font-size:9.5px;line-height:14px;color:#1c1c2c;transform:scaleX(0.887);">%</span>
<div style="left:500px;top:243px;width:110px;height:15.3px;background:linear-gradient(90deg,#640808,#d64d4d);border:1px solid #555;"></div>
<div style="left:610px;top:243px;width:16.5px;height:15.3px;background:#f4f4f4;border:1px solid #333;"></div>
<svg style="left:614px;top:248.6px;" width="8" height="5" viewBox="0 0 8 5"><path d="M0 0 L8 0 L4 4.4 Z" fill="#111"/></svg>
<div style="left:633.3px;top:246.3px;width:10px;height:10px;background:linear-gradient(135deg,#dcdcdc,#fafafa);border:1px solid #8a8f99;"></div>
<span style="left:645.8px;top:244.4px;font-size:9.5px;line-height:14px;color:#1c1c2c;transform:scaleX(0.834);">Reverse</span>
<div style="left:500px;top:263px;width:125.5px;height:16.8px;background:#fff;border:1px solid #e2e2e2;"></div>
<svg style="left:615.5px;top:269.9px;" width="7" height="4" viewBox="0 0 7 4"><path d="M0 0 L7 0 L3.5 3.8 Z" fill="#111"/></svg>
<div style="left:633.3px;top:266.3px;width:10px;height:10px;background:linear-gradient(135deg,#dcdcdc,#fafafa);border:1px solid #8a8f99;"></div>
<svg style="left:634.8px;top:267.8px;" width="7" height="7" viewBox="0 0 7 7"><path d="M0.8 3.4 L2.8 6 L6.3 0.7" fill="none" stroke="#2b3fa0" stroke-width="1.4"/></svg>
<span style="left:645.8px;top:264.4px;font-size:9.5px;line-height:14px;color:#1c1c2c;transform:scaleX(0.925);">Align with Layer</span>
<div style="left:556px;top:291.6px;width:34px;height:14.2px;background:#fff;border:1px solid #e0e0e0;"></div>
<span style="left:560.8px;top:292.6px;font-size:9px;line-height:14px;color:#1c1c2c;transform:scaleX(0.849);">90</span>
<span style="left:594px;top:292.8px;font-size:9px;line-height:14px;color:#1c1c2c;">°</span>
<div style="left:500px;top:321.3px;width:119px;height:4.6px;background:linear-gradient(#a9a9a9 0%,#b4b4b4 50%,#cdcdcd 55%,#d2d2d2 100%);border-radius:1px;"></div>
<svg style="left:577.6px;top:322.2px;" width="10.4" height="9" viewBox="0 0 10.4 9"><path d="M5 0.5 L9.4 5.6 L9.4 8.4 L0.6 8.4 L0.6 5.6 Z" fill="#d6d6d6" stroke="#6e6e6e" stroke-width="0.9"/></svg>
<div style="left:631.5px;top:318.5px;width:34.5px;height:14px;background:#fff;border:1px solid #e0e0e0;"></div>
<span style="left:636.5px;top:318.8px;font-size:9px;line-height:14px;color:#1c1c2c;transform:scaleX(0.898);">100</span>
<span style="left:669.5px;top:318.6px;font-size:9.5px;line-height:14px;color:#1c1c2c;transform:scaleX(0.887);">%</span>
<div style="left:510px;top:346.5px;width:66.5px;height:14.3px;background:linear-gradient(#f4f4f4 0%,#ececec 45%,#dedede 52%,#d0d0d0 100%);border:1px solid #777;border-radius:3px;box-shadow:inset 0 0 0 1px rgba(255,255,255,.8);"></div>
<span style="left:519.75px;top:346.85px;font-size:9.5px;line-height:14px;color:#1c1c2c;transform:scaleX(0.84);">Make Default</span>
<div style="left:585.3px;top:346.5px;width:81.5px;height:14.3px;background:linear-gradient(#f4f4f4 0%,#ececec 45%,#dedede 52%,#d0d0d0 100%);border:1px solid #777;border-radius:3px;box-shadow:inset 0 0 0 1px rgba(255,255,255,.8);"></div>
<span style="left:596.55px;top:346.85px;font-size:9.5px;line-height:14px;color:#1c1c2c;transform:scaleX(0.866);">Reset to Default</span>
<div style="left:743.5px;top:178px;width:75px;height:15px;background:linear-gradient(#e9f6fd 0%,#d6effb 45%,#b6e2f8 52%,#a3d8f3 100%);border:1px solid #3aa9d8;border-radius:3px;box-shadow:inset 0 0 0 1px #5fd0f2;"></div>
<span style="left:774.25px;top:178.7px;font-size:11px;line-height:14px;color:#1c1c2c;transform:scaleX(0.849);">OK</span>
<div style="left:743.5px;top:201.5px;width:75px;height:15px;background:linear-gradient(#f4f4f4 0%,#ececec 45%,#dedede 52%,#d0d0d0 100%);border:1px solid #777;border-radius:3px;box-shadow:inset 0 0 0 1px rgba(255,255,255,.8);"></div>
<span style="left:765.5px;top:202.2px;font-size:11px;line-height:14px;color:#1c1c2c;transform:scaleX(0.905);">Cancel</span>
<div style="left:743.5px;top:225.2px;width:75px;height:15.3px;background:linear-gradient(#f4f4f4 0%,#ececec 45%,#dedede 52%,#d0d0d0 100%);border:1px solid #777;border-radius:3px;box-shadow:inset 0 0 0 1px rgba(255,255,255,.8);"></div>
<span style="left:753px;top:226.05px;font-size:11px;line-height:14px;color:#1c1c2c;transform:scaleX(0.954);">New Style...</span>
<div style="left:754px;top:248.5px;width:10px;height:10px;background:linear-gradient(135deg,#dcdcdc,#fafafa);border:1px solid #8a8f99;"></div>
<svg style="left:755.5px;top:250px;" width="7" height="7" viewBox="0 0 7 7"><path d="M0.8 3.4 L2.8 6 L6.3 0.7" fill="none" stroke="#2b3fa0" stroke-width="1.4"/></svg>
<span style="left:767.3px;top:246.6px;font-size:11px;line-height:14px;color:#1c1c2c;transform:scaleX(0.92);">Preview</span>
<div style="left:753px;top:266px;width:55px;height:53.5px;background:#dcdcdc;border:1px solid #e6e6e6;"></div>
<div style="left:767px;top:281px;width:26.5px;height:26px;background:linear-gradient(#c93535,#8f1717);"></div>
<div style="left:182px;top:155.5px;width:377px;height:421.8px;background:rgba(0,0,0,.25);border-radius:6px 6px 2px 2px;"></div>
<div style="left:183px;top:156.5px;width:375px;height:419.8px;background:linear-gradient(180deg,#a2bbd9 0px,#adc4df 12px,#bacee6 24px,#b9d5f0 25px,#b9d5f0 100%);border:1px solid #3c4e64;border-radius:5px 5px 1px 1px;border-right:1.6px solid #1d4c66;border-bottom-color:#1d3446;"></div>
<div style="left:184px;top:157.5px;width:373px;height:417.8px;border:1px solid rgba(255,255,255,.7);border-radius:4px 4px 1px 1px;border-right-color:rgba(255,255,255,.15);border-bottom-color:rgba(255,255,255,.2);"></div>
<div style="left:185px;top:158.5px;width:371px;height:22px;background:linear-gradient(90deg,rgba(255,255,255,0) 0%,rgba(255,255,255,.08) 40%,rgba(255,255,255,.18) 100%);border-radius:4px 4px 0 0;"></div>
<span style="left:193.5px;top:165.2px;font-size:10.5px;line-height:14px;color:#1a1c33;transform:scaleX(0.942);">Gradient Editor</span>
<div style="left:467.3px;top:165.4px;width:25.8px;height:14px;background:linear-gradient(#c0d3e8 0%,#b6cbe3 48%,#a2bad8 52%,#b2c8e1 100%);border:1px solid #8095b0;border-radius:3px;box-shadow:inset 0 0 0 1px rgba(255,255,255,.5);"></div>
<div style="left:476px;top:172px;width:9px;height:3.8px;background:#fff;border:1px solid #56657a;border-radius:1px;"></div>
<div style="left:495.3px;top:165.4px;width:26px;height:14px;background:linear-gradient(#c0d3e8 0%,#b6cbe3 48%,#a2bad8 52%,#b2c8e1 100%);border:1px solid #8095b0;border-radius:3px;box-shadow:inset 0 0 0 1px rgba(255,255,255,.5);"></div>
<svg style="left:503.2px;top:168.8px;" width="10" height="7.4" viewBox="0 0 10 7.4"><rect x="0.6" y="0.6" width="8.8" height="6.2" rx="1" fill="#fff" stroke="#56657a" stroke-width="0.9"/><rect x="3" y="2.8" width="4" height="2" fill="#8ea6c4" stroke="#56657a" stroke-width="0.7"/></svg>
<div style="left:523px;top:165.4px;width:26.2px;height:14px;background:linear-gradient(#e0a091 0%,#d4715c 45%,#c2402a 50%,#cf5a40 85%,#dd8a70 100%);border:1px solid #7a3328;border-radius:3px;box-shadow:inset 0 0 0 1px rgba(255,255,255,.35);"></div>
<svg style="left:531.5px;top:168.6px;" width="9.2" height="7.6" viewBox="0 0 9.2 7.6"><path d="M1.6 1.2 L7.6 6.4 M7.6 1.2 L1.6 6.4" stroke="#7a3226" stroke-width="3" stroke-linecap="round"/><path d="M1.6 1.2 L7.6 6.4 M7.6 1.2 L1.6 6.4" stroke="#fff" stroke-width="1.9" stroke-linecap="butt"/></svg>
<div style="left:189.6px;top:181.3px;width:361.4px;height:389px;background:#eeeeee;"></div>
<div style="left:198px;top:197px;width:265.5px;height:117px;border:1px solid #b9b9b9;box-shadow:inset 1px 1px 0 rgba(255,255,255,.9), 1px 1px 0 rgba(255,255,255,.9);"></div>
<div style="left:212.5px;top:195px;width:42.5px;height:5px;background:#eeeeee;"></div>
<span style="left:216.5px;top:190.3px;font-size:11px;line-height:14px;color:#1c1c2c;transform:scaleX(0.925);">Presets</span>
<svg style="left:436px;top:191.6px;" width="13" height="10" viewBox="0 0 13 10"><g transform="translate(4.7 4.7)"><circle r="2.6" fill="none" stroke="#222" stroke-width="1.7"/><g stroke="#222" stroke-width="1.5"><path d="M0 -4.6 L0 -2.8 M0 4.6 L0 2.8 M-4.6 0 L-2.8 0 M4.6 0 L2.8 0 M-3.25 -3.25 L-2 -2 M3.25 3.25 L2 2 M-3.25 3.25 L-2 2 M3.25 -3.25 L2 -2"/></g></g><path d="M10.4 7.4 L12.8 7.4 L11.6 8.8 Z" fill="#222"/></svg>
<div style="left:433.5px;top:195px;width:1.5px;height:4px;background:#eeeeee;"></div>
<div style="left:206.8px;top:209.2px;width:248.8px;height:96.8px;background:#c4c4c4;border:1px solid #7d7d7d;"></div>
<div style="left:441.8px;top:210.2px;width:12.8px;height:94.8px;background:#eaeaea;border-left:1px solid #d6d6d6;"></div>
<svg style="left:445px;top:216.5px;" width="7" height="4" viewBox="0 0 7 4"><path d="M0.4 3.6 L3.5 0.6 L6.6 3.6" fill="none" stroke="#777" stroke-width="1.2"/></svg>
<svg style="left:445px;top:296px;" width="7" height="4" viewBox="0 0 7 4"><path d="M0 0.3 L7 0.3 L3.5 3.8 Z" fill="#666"/></svg>
<div style="left:208px;top:210.4px;width:27px;height:26.8px;background:linear-gradient(135deg,#000 26%,#fff 72%);border-right:1px solid #dcdcdc;border-bottom:1px solid #d0d0d0;"></div>
<div style="left:235px;top:210.4px;width:27px;height:26.8px;background:linear-gradient(135deg,#000 24%,rgba(0,0,0,0) 62%),repeating-conic-gradient(#c4c4c4 0% 25%,#ffffff 0% 50%) 0 0/6.75px 6.7px;border-right:1px solid #dcdcdc;border-bottom:1px solid #d0d0d0;"></div>
<div style="left:262px;top:210.4px;width:27px;height:26.8px;background:linear-gradient(135deg,#000 26%,#fff 72%);border-right:1px solid #dcdcdc;border-bottom:1px solid #d0d0d0;"></div>
<div style="left:289px;top:210.4px;width:27px;height:26.8px;background:linear-gradient(135deg,#e60d18 32%,#0c6420 72%);border-right:1px solid #dcdcdc;border-bottom:1px solid #d0d0d0;"></div>
<div style="left:316px;top:210.4px;width:27px;height:26.8px;background:linear-gradient(135deg,#2a0a70 22%,#ff7a00 78%);border-right:1px solid #dcdcdc;border-bottom:1px solid #d0d0d0;"></div>
<div style="left:343px;top:210.4px;width:27px;height:26.8px;background:linear-gradient(135deg,#0a14c8 24%,#ff1010 50%,#fff000 76%);border-right:1px solid #dcdcdc;border-bottom:1px solid #d0d0d0;"></div>
<div style="left:370px;top:210.4px;width:27px;height:26.8px;background:linear-gradient(135deg,#0b1399 28%,#ffe414 45%,#ffe414 55%,#0b1399 72%);border-right:1px solid #dcdcdc;border-bottom:1px solid #d0d0d0;"></div>
<div style="left:397px;top:210.4px;width:27px;height:26.8px;background:linear-gradient(135deg,#ff6a00 20%,#fff21a 44%,#fff21a 56%,#ff6a00 82%);border-right:1px solid #dcdcdc;border-bottom:1px solid #d0d0d0;"></div>
<div style="left:208px;top:237.2px;width:27px;height:26.8px;background:linear-gradient(135deg,#7a0c8c 24%,#0a6e20 50%,#ff7a00 76%);border-right:1px solid #dcdcdc;border-bottom:1px solid #d0d0d0;"></div>
<div style="left:235px;top:237.2px;width:27px;height:26.8px;background:linear-gradient(135deg,#ffe414 26%,#6c0c8c 40%,#ff7a00 58%,#0a2c8c 76%);border-right:1px solid #dcdcdc;border-bottom:1px solid #d0d0d0;"></div>
<div style="left:262px;top:237.2px;width:27px;height:26.8px;background:linear-gradient(135deg,#8c4412 20%,#f8d4b6 44%,#8c4412 68%,#f6e0d2 88%);border-right:1px solid #dcdcdc;border-bottom:1px solid #d0d0d0;"></div>
<div style="left:289px;top:237.2px;width:27px;height:26.8px;background:linear-gradient(135deg,#2a86d2 20%,#ffffff 49%,#6c4a00 50%,#e4aa20 60%,#ffffff 88%);border-right:1px solid #dcdcdc;border-bottom:1px solid #d0d0d0;"></div>
<div style="left:316px;top:237.2px;width:27px;height:26.8px;background:linear-gradient(135deg,#ff0000 16%,#ff00ff 28%,#0000ff 40%,#00ffff 52%,#00ff00 64%,#ffff00 76%,#ff0000 86%);border-right:1px solid #dcdcdc;border-bottom:1px solid #d0d0d0;"></div>
<div style="left:343px;top:237.2px;width:27px;height:26.8px;background:linear-gradient(135deg,rgba(255,0,0,0) 24%,#ff0000 32%,#ff00ff 39%,#0000ff 46%,#00ffff 53%,#00ff00 60%,#ffff00 66%,#ff0000 72%,rgba(255,0,0,0) 80%),repeating-conic-gradient(#c4c4c4 0% 25%,#ffffff 0% 50%) 0 0/6.75px 6.7px;border-right:1px solid #dcdcdc;border-bottom:1px solid #d0d0d0;"></div>
<div style="left:370px;top:237.2px;width:27px;height:26.8px;background:repeating-linear-gradient(135deg,#000 0 3.2px,rgba(0,0,0,0) 3.2px 6.4px),repeating-conic-gradient(#c4c4c4 0% 25%,#ffffff 0% 50%) 0 0/6.75px 6.7px;border-right:1px solid #dcdcdc;border-bottom:1px solid #d0d0d0;"></div>
<div style="left:397px;top:237.2px;width:27px;height:26.8px;background:linear-gradient(135deg,rgba(120,120,120,.8) 20%,rgba(140,140,140,0) 70%),repeating-conic-gradient(#c4c4c4 0% 25%,#ffffff 0% 50%) 0 0/6.75px 6.7px;border-right:1px solid #dcdcdc;border-bottom:1px solid #d0d0d0;"></div>
<div style="left:471.5px;top:193.3px;width:75.3px;height:22.3px;border:2px solid #e01b24;"></div>
<div style="left:477px;top:197px;width:64.8px;height:14.5px;background:linear-gradient(#e9f6fd 0%,#d6effb 45%,#b6e2f8 52%,#a3d8f3 100%);border:1px solid #3aa9d8;border-radius:3px;box-shadow:inset 0 0 0 1px #5fd0f2;"></div>
<span style="left:502.65px;top:197.45px;font-size:11px;line-height:14px;color:#1c1c2c;transform:scaleX(0.849);">OK</span>
<div style="left:477px;top:220.5px;width:64.8px;height:14.5px;background:linear-gradient(#f4f4f4 0%,#ececec 45%,#dedede 52%,#d0d0d0 100%);border:1px solid #777;border-radius:3px;box-shadow:inset 0 0 0 1px rgba(255,255,255,.8);"></div>
<span style="left:493.9px;top:220.95px;font-size:11px;line-height:14px;color:#1c1c2c;transform:scaleX(0.905);">Cancel</span>
<div style="left:477px;top:250.2px;width:64.8px;height:14.5px;background:linear-gradient(#f4f4f4 0%,#ececec 45%,#dedede 52%,#d0d0d0 100%);border:1px solid #777;border-radius:3px;box-shadow:inset 0 0 0 1px rgba(255,255,255,.8);"></div>
<span style="left:493.65px;top:250.65px;font-size:11px;line-height:14px;color:#1c1c2c;transform:scaleX(0.936);">Load...</span>
<div style="left:477px;top:274px;width:64.8px;height:14.5px;background:linear-gradient(#f4f4f4 0%,#ececec 45%,#dedede 52%,#d0d0d0 100%);border:1px solid #777;border-radius:3px;box-shadow:inset 0 0 0 1px rgba(255,255,255,.8);"></div>
<span style="left:493.4px;top:274.45px;font-size:11px;line-height:14px;color:#1c1c2c;transform:scaleX(0.934);">Save...</span>
<div style="left:477px;top:329.8px;width:64.8px;height:14.5px;background:linear-gradient(#f4f4f4 0%,#ececec 45%,#dedede 52%,#d0d0d0 100%);border:1px solid #777;border-radius:3px;box-shadow:inset 0 0 0 1px rgba(255,255,255,.8);"></div>
<span style="left:499.9px;top:330.25px;font-size:11px;line-height:14px;color:#1c1c2c;transform:scaleX(0.863);">New</span>
<span style="left:197.8px;top:329.4px;font-size:11px;line-height:14px;color:#1c1c2c;transform:scaleX(0.895);">Name:</span>
<div style="left:241.6px;top:328.5px;width:222px;height:15.5px;background:#fff;border:1px solid #e3e3e3;"></div>
<span style="left:246.5px;top:329.6px;font-size:11px;line-height:14px;color:#1c1c2c;transform:scaleX(0.923);">Custom</span>
<div style="left:198.8px;top:364.5px;width:340.8px;height:186.2px;border:1px solid #b9b9b9;box-shadow:inset 1px 1px 0 rgba(255,255,255,.9), 1px 1px 0 rgba(255,255,255,.9);"></div>
<div style="left:211px;top:362.5px;width:145px;height:5px;background:#eeeeee;"></div>
<span style="left:226px;top:360.6px;font-size:11px;line-height:14px;color:#1c1c2c;transform:scaleX(0.952);">Gradient Type:</span>
<div style="left:299.6px;top:358.3px;width:52.5px;height:19px;background:#fff;border:1px solid #e6e6e6;"></div>
<span style="left:305px;top:360.8px;font-size:11px;line-height:14px;color:#1c1c2c;transform:scaleX(0.838);">Solid</span>
<svg style="left:342px;top:366.3px;" width="7" height="4" viewBox="0 0 7 4"><path d="M0 0 L7 0 L3.5 3.8 Z" fill="#111"/></svg>
<span style="left:207.7px;top:387.2px;font-size:11px;line-height:14px;color:#1c1c2c;transform:scaleX(0.927);">Smoothness:</span>
<div style="left:271px;top:385.3px;width:45px;height:18.2px;background:#fff;border:1px solid #b0b0b0;"></div>
<div style="left:297px;top:386.3px;width:18px;height:16.2px;background:linear-gradient(#e6e6e6,#cfcfcf);border-left:1px solid #b8b8b8;"></div>
<svg style="left:304.5px;top:392px;" width="4" height="5" viewBox="0 0 4 5"><path d="M0.3 0 L3.6 2.5 L0.3 5 Z" fill="#3c5a8c"/></svg>
<span style="left:275.5px;top:387.4px;font-size:11px;line-height:14px;color:#2a1c5c;transform:scaleX(0.926);">100</span>
<span style="left:320.5px;top:387.2px;font-size:11px;line-height:14px;color:#1c1c2c;transform:scaleX(0.92);">%</span>
<div style="left:212px;top:426px;width:316px;height:22px;background:linear-gradient(90deg,#610707 0%,#6a0b0b 10%,#d74e4e 100%);border-top:1px solid #4a0505;"></div>
<svg style="left:208.2px;top:410.8px;" width="10" height="15" viewBox="0 0 10 15"><path d="M0.6 0.6 L9.4 0.6 L9.4 9.2 L5 14 L0.6 9.2 Z" fill="#f4f4f4" stroke="#555" stroke-width="1"/><rect x="1.8" y="1.8" width="6.4" height="6.2" fill="#000"/></svg>
<svg style="left:522.3px;top:410.8px;" width="10" height="15" viewBox="0 0 10 15"><path d="M0.6 0.6 L9.4 0.6 L9.4 9.2 L5 14 L0.6 9.2 Z" fill="#f4f4f4" stroke="#555" stroke-width="1"/><rect x="1.8" y="1.8" width="6.4" height="6.2" fill="#000"/></svg>
<div style="left:204.3px;top:448.6px;width:18.6px;height:19px;border:2px solid #e01b24;"></div>
<svg style="left:207.8px;top:449.6px;" width="10.4" height="15" viewBox="0 0 10.4 15"><path d="M5.2 0.6 L9.8 5.2 L9.8 14.2 L0.6 14.2 L0.6 5.2 Z" fill="#f0f0f0" stroke="#555" stroke-width="1"/><rect x="2" y="6.4" width="6.4" height="6.4" fill="#5c0606"/></svg>
<div style="left:516px;top:448.6px;width:22.3px;height:19px;border:2px solid #e01b24;"></div>
<svg style="left:522.2px;top:449.6px;" width="10.4" height="15" viewBox="0 0 10.4 15"><path d="M5.2 0.6 L9.8 5.2 L9.8 14.2 L0.6 14.2 L0.6 5.2 Z" fill="#f0f0f0" stroke="#555" stroke-width="1"/><path d="M5.2 0.6 L9.8 5.2 L0.6 5.2 Z" fill="#111"/><rect x="2" y="6.4" width="6.4" height="6.4" fill="#d94f4f"/></svg>
<svg style="left:366.7px;top:449.6px;" width="6" height="6" viewBox="0 0 6 6"><path d="M3 0.5 L5.5 3 L3 5.5 L0.5 3 Z" fill="#fff" stroke="#222" stroke-width="0.9"/></svg>
<div style="left:206.5px;top:477px;width:327.2px;height:66.5px;border:1px solid #b9b9b9;box-shadow:inset 1px 1px 0 rgba(255,255,255,.9), 1px 1px 0 rgba(255,255,255,.9);"></div>
<div style="left:221.3px;top:475px;width:33.5px;height:5px;background:#eeeeee;"></div>
<span style="left:225.3px;top:470.3px;font-size:11px;line-height:14px;color:#1c1c2c;transform:scaleX(0.906);">Stops</span>
<span style="left:229px;top:491.4px;font-size:11px;line-height:14px;color:#a6a6a6;transform:scaleX(0.929);">Opacity:</span>
<div style="left:271.2px;top:489.4px;width:45px;height:18.4px;background:#f4f4f4;border:1px solid #bdbdbd;"></div>
<div style="left:297px;top:490.4px;width:1px;height:16.4px;background:#c8c8c8;"></div>
<svg style="left:305px;top:496.5px;" width="3.5" height="4.4" viewBox="0 0 3.5 4.4"><path d="M0.3 0 L3.2 2.2 L0.3 4.4 Z" fill="#999"/></svg>
<span style="left:319.8px;top:491.4px;font-size:11px;line-height:14px;color:#a6a6a6;transform:scaleX(0.941);">%</span>
<span style="left:348.3px;top:491.4px;font-size:11px;line-height:14px;color:#a6a6a6;transform:scaleX(0.929);">Location:</span>
<div style="left:393.9px;top:491px;width:36.5px;height:16.3px;background:#f4f4f4;border:1px solid #bdbdbd;"></div>
<span style="left:434.2px;top:491.4px;font-size:11px;line-height:14px;color:#a6a6a6;transform:scaleX(0.971);">%</span>
<div style="left:460.6px;top:492.2px;width:64.2px;height:14.4px;background:#f1f1f1;border:1px solid #b4b4b4;border-radius:3px;"></div>
<span style="left:477.95px;top:492.6px;font-size:11px;line-height:14px;color:#8e8e8e;transform:scaleX(0.928);">Delete</span>
<span style="left:241.7px;top:519px;font-size:11px;line-height:14px;color:#1c1c2c;transform:scaleX(0.92);">Color:</span>
<div style="left:264.4px;top:513px;width:61.6px;height:27.6px;background:#eeeeee;border:2px solid #e01b24;"></div>
<div style="left:272px;top:518px;width:35px;height:16.4px;background:#d84d4d;border:1px solid #8c8c8c;"></div>
<div style="left:309px;top:518px;width:12.8px;height:16.4px;background:#ededed;border:1px solid #8c8c8c;"></div>
<svg style="left:312.6px;top:521.4px;" width="6" height="10" viewBox="0 0 6 10"><path d="M0.3 0.3 L5.7 5 L0.3 9.7 Z" fill="#000"/></svg>
<span style="left:348.8px;top:519px;font-size:11px;line-height:14px;color:#1c1c2c;transform:scaleX(0.929);">Location:</span>
<div style="left:394px;top:518.7px;width:36.4px;height:14.8px;background:#fff;border:1px solid #d9d9d9;"></div>
<div style="left:399.3px;top:520.2px;width:18.6px;height:11.8px;background:#3a8ee6;"></div>
<span style="left:400px;top:519.3px;font-size:11px;line-height:14px;color:#fff;transform:scaleX(0.926);">100</span>
<span style="left:434.2px;top:519px;font-size:11px;line-height:14px;color:#1c1c2c;transform:scaleX(0.971);">%</span>
<div style="left:460.6px;top:519.2px;width:64.2px;height:14.4px;background:#f1f1f1;border:1px solid #b4b4b4;border-radius:3px;"></div>
<span style="left:477.95px;top:519.6px;font-size:11px;line-height:14px;color:#8e8e8e;transform:scaleX(0.928);">Delete</span>
<svg style="left:541.5px;top:560.5px;" width="8" height="8" viewBox="0 0 8 8"><g fill="#b8b8b8"><rect x="6" y="0" width="1.6" height="1.6"/><rect x="3" y="3" width="1.6" height="1.6"/><rect x="6" y="3" width="1.6" height="1.6"/><rect x="0" y="6" width="1.6" height="1.6"/><rect x="3" y="6" width="1.6" height="1.6"/><rect x="6" y="6" width="1.6" height="1.6"/></g></svg>
</div></body></html>
